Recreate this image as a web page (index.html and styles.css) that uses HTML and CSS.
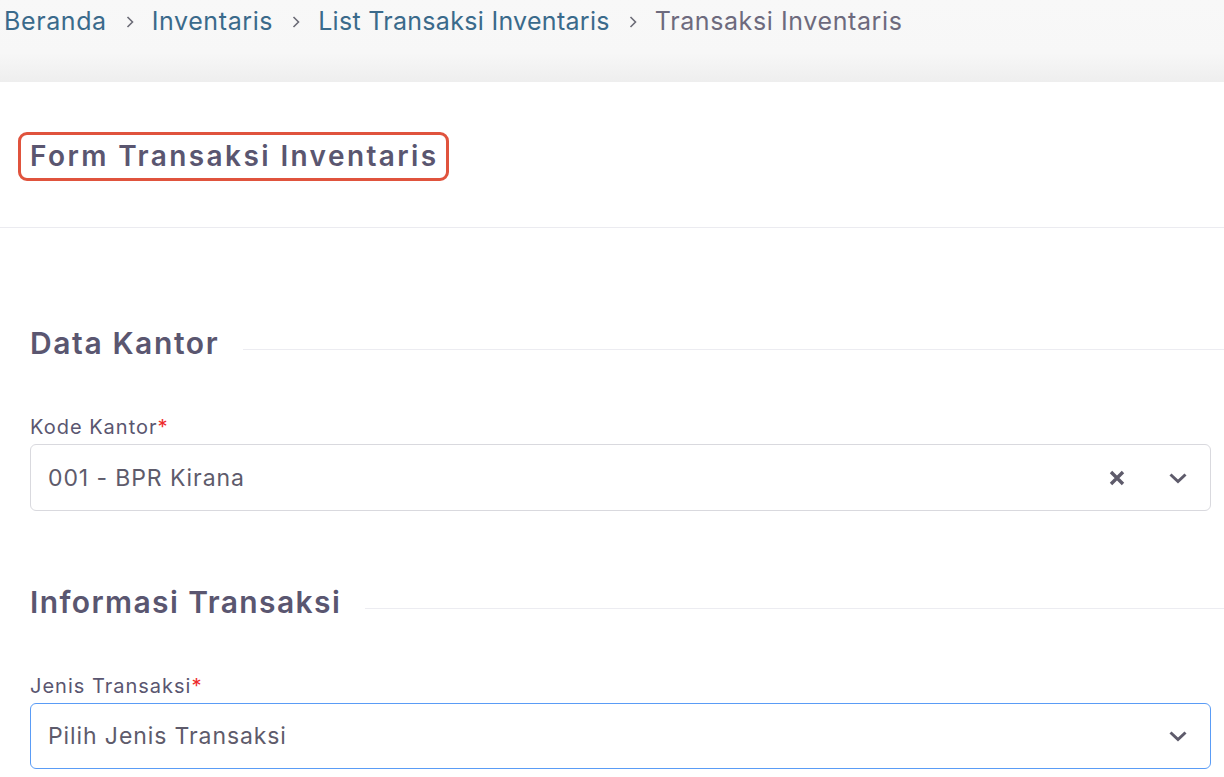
FILE: index.html
```html
<!DOCTYPE html>
<html lang="id">
<head>
<meta charset="utf-8">
<title>Form Transaksi Inventaris</title>
<link rel="stylesheet" href="styles.css">
</head>
<body>
<nav class="crumbs">
  <a class="crumb link">Beranda</a>
  <svg class="sep" viewBox="0 0 8 12" width="8" height="12"><path d="M1.5 1 L6.5 6 L1.5 11" fill="none" stroke="#6b6b76" stroke-width="1.6"/></svg>
  <a class="crumb link">Inventaris</a>
  <svg class="sep" viewBox="0 0 8 12" width="8" height="12"><path d="M1.5 1 L6.5 6 L1.5 11" fill="none" stroke="#6b6b76" stroke-width="1.6"/></svg>
  <a class="crumb link tight">List Transaksi Inventaris</a>
  <svg class="sep" viewBox="0 0 8 12" width="8" height="12"><path d="M1.5 1 L6.5 6 L1.5 11" fill="none" stroke="#6b6b76" stroke-width="1.6"/></svg>
  <span class="crumb current">Transaksi Inventaris</span>
</nav>
<main class="card">
  <header class="card-head">
    <h1 class="title">Form Transaksi Inventaris</h1>
  </header>
  <section class="card-body">
    <div class="section-title"><h2>Data Kantor</h2><span class="rule"></span></div>
    <div class="field">
      <label class="label">Kode Kantor<span class="req">*</span></label>
      <div class="select">
        <span class="value">001 - BPR Kirana</span>
        <span class="icons">
          <svg viewBox="0 0 16 16" width="16" height="16"><path d="M2 2 L14 14 M14 2 L2 14" stroke="#5e5b6b" stroke-width="3.4" stroke-linecap="butt"/></svg>
          <svg viewBox="0 0 20 12" width="20" height="12"><path d="M2.5 2.5 L10 9.5 L17.5 2.5" fill="none" stroke="#5e5b6b" stroke-width="3"/></svg>
        </span>
      </div>
    </div>
    <div class="section-title second"><h2>Informasi Transaksi</h2><span class="rule"></span></div>
    <div class="field">
      <label class="label">Jenis Transaksi<span class="req">*</span></label>
      <div class="select focus">
        <span class="value">Pilih Jenis Transaksi</span>
        <span class="icons">
          <svg viewBox="0 0 20 12" width="20" height="12"><path d="M2.5 2.5 L10 9.5 L17.5 2.5" fill="none" stroke="#5e5b6b" stroke-width="3"/></svg>
        </span>
      </div>
    </div>
  </section>
</main>
</body>
</html>
```
FILE: styles.css
```css
* { box-sizing: border-box; }
html, body { margin: 0; padding: 0; }
body {
  font-family: Inter, "Noto Sans", sans-serif;
  background: #ffffff;
  color: #5a5670;
  width: 1224px;
  overflow: hidden;
}
.crumbs {
  height: 82px;
  background: linear-gradient(#f8f8f8 0%, #f7f7f7 65%, #eeeeee 100%);
  display: flex;
  align-items: flex-start;
  padding: 5px 0 0 4px;
}
.crumb {
  font-size: 25px;
  line-height: 32px;
  letter-spacing: 0.6px;
  white-space: nowrap;
}
.crumb.tight { letter-spacing: 0.3px; }
.link { color: #3a6a8b; }
.current { color: #6d6a7d; }
.sep { margin: 11px 18px 0 19px; flex: none; }
.card { background: #fff; }
.card-head {
  height: 146px;
  border-bottom: 1px solid #ebebf0;
  padding: 50px 0 0 18px;
}
.title {
  display: inline-block;
  margin: 0;
  font-size: 28px;
  line-height: 43px;
  font-weight: 600;
  letter-spacing: 2.4px;
  color: #5a5670;
  border: 3px solid #e0533d;
  border-radius: 9px;
  padding: 0 7px 0 9px;
}
.card-body { padding: 95px 13px 0 30px; }
.section-title {
  display: flex;
  align-items: center;
  margin-right: -13px;
  gap: 24px;
}
.section-title h2 {
  margin: 0;
  font-size: 30px;
  line-height: 40px;
  font-weight: 600;
  letter-spacing: 1.6px;
  color: #5a5670;
}
.section-title .rule {
  flex: 1;
  height: 1px;
  background: #ececf1;
  margin-top: 13px;
}
.section-title.second h2 { letter-spacing: 1.4px; }
.section-title.second { margin-top: 71px; }
.field { margin-top: 52px; }
.label {
  display: block;
  font-size: 20px;
  line-height: 24px;
  letter-spacing: 1px;
  color: #5a5670;
  margin-bottom: 5px;
}
.req { color: #ee2a2a; }
.select {
  height: 67px;
  border: 1px solid #d9d9de;
  border-radius: 6px;
  display: flex;
  align-items: center;
  justify-content: space-between;
  padding: 0 22px 0 17px;
}
.select.focus {
  border-color: #5a9cf6;
  height: 66px;
}
.value {
  font-size: 23px;
  letter-spacing: 0.9px;
  color: #5e5b6b;
}
.icons { display: flex; align-items: center; gap: 43px; }
.icons svg { display: block; }
```
